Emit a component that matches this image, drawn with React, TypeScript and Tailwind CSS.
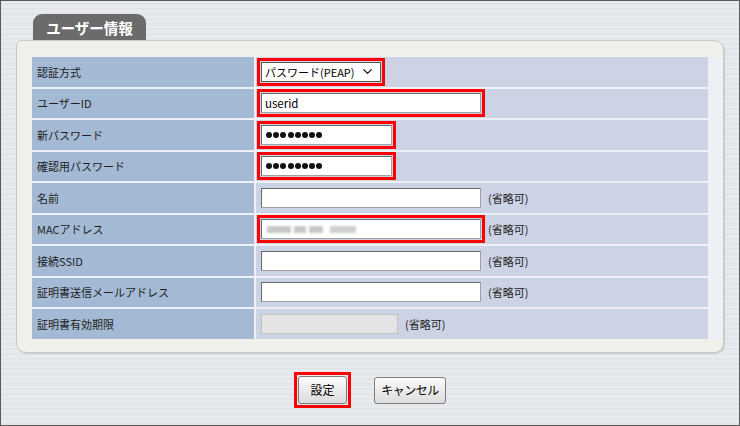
import { ChevronDown } from 'lucide-react';

const font = { fontFamily: '"Noto Sans CJK JP", "Noto Sans", sans-serif' };

function Hl({ on, children }: { on?: boolean; children: React.ReactNode }) {
  return (
    <div className={`p-[1px] border-[3px] ${on ? 'border-[#ff0000]' : 'border-transparent'}`}>
      {children}
    </div>
  );
}

function Box({ w, children, disabled }: { w: string; children?: React.ReactNode; disabled?: boolean }) {
  return (
    <div
      className={`${w} h-[20px] flex items-center px-[3px] text-[11.5px] text-black ${
        disabled
          ? 'bg-[#e4e4e4] border border-[#c2c2c2]'
          : 'bg-white border border-[#6a6a6a] border-b-[#a0a0a0] border-r-[#a0a0a0]'
      }`}
    >
      {children}
    </div>
  );
}

const Opt = () => <span className="ml-[3px] text-[11px] text-[#222]">(省略可)</span>;

const Dots = () => (
  <div className="flex items-center gap-[1.2px] ml-[1px]">
    {[0, 1, 2, 3, 4, 5, 6, 7].map((i) => (
      <span key={i} className="w-[6px] h-[6px] rounded-full bg-[#111]" />
    ))}
  </div>
);

const rows: { label: string; value: React.ReactNode }[] = [
  {
    label: '認証方式',
    value: (
      <Hl on>
        <div className="w-[120px] h-[20px] flex items-center justify-between bg-white border border-[#555] pl-[3px] pr-[5px] text-[11px] text-black whitespace-nowrap">
          <span>パスワード(PEAP)</span>
          <ChevronDown size={15} strokeWidth={1.8} />
        </div>
      </Hl>
    ),
  },
  {
    label: 'ユーザーID',
    value: (
      <Hl on>
        <Box w="w-[220px]">userid</Box>
      </Hl>
    ),
  },
  {
    label: '新パスワード',
    value: (
      <Hl on>
        <Box w="w-[131px]">
          <Dots />
        </Box>
      </Hl>
    ),
  },
  {
    label: '確認用パスワード',
    value: (
      <Hl on>
        <Box w="w-[131px]">
          <Dots />
        </Box>
      </Hl>
    ),
  },
  {
    label: '名前',
    value: (
      <>
        <Hl>
          <Box w="w-[220px]" />
        </Hl>
        <Opt />
      </>
    ),
  },
  {
    label: 'MACアドレス',
    value: (
      <>
        <Hl on>
          <Box w="w-[220px]">
            <div className="flex items-center gap-[3px] blur-[1px] ml-[2px]">
              <span className="w-[24px] h-[7px] bg-[#c8c8c8]" />
              <span className="w-[12px] h-[7px] bg-[#c8c8c8]" />
              <span className="w-[14px] h-[7px] bg-[#c8c8c8]" />
              <span className="w-[26px] h-[7px] bg-[#cfcfcf] ml-[4px]" />
            </div>
          </Box>
        </Hl>
        <Opt />
      </>
    ),
  },
  {
    label: '接続SSID',
    value: (
      <>
        <Hl>
          <Box w="w-[220px]" />
        </Hl>
        <Opt />
      </>
    ),
  },
  {
    label: '証明書送信メールアドレス',
    value: (
      <>
        <Hl>
          <Box w="w-[220px]" />
        </Hl>
        <Opt />
      </>
    ),
  },
  {
    label: '証明書有効期限',
    value: (
      <>
        <Hl>
          <Box w="w-[137px]" disabled />
        </Hl>
        <Opt />
      </>
    ),
  },
];

export default function App() {
  return (
    <div
      style={font}
      className="w-[740px] h-[426px] border border-[#5a5a5a] pt-[13px] pl-[15px] bg-[#e3e6ea] bg-[repeating-linear-gradient(180deg,#e7eaee_0px,#e7eaee_2px,#d9dde2_3px,#eceef1_4px,#e1e4e8_5px)]"
    >
      <div className="ml-[17px] w-[113px] h-[26px] rounded-t-[9px] bg-[#6b6b6b] text-white font-bold text-[14.5px] flex items-center justify-center pt-[1px]">
        ユーザー情報
      </div>
      <div className="w-[708px] h-[313px] rounded-[10px] rounded-tl-[6px] bg-[#f1f1ec] border border-[#c9c9c6] shadow-[1px_1px_1px_rgba(0,0,0,0.12)] pt-[16px] pl-[15px]">
        <div className="grid grid-cols-[222px_452px] gap-[2px] bg-[#edf0f5]">
          {rows.map((r) => (
            <div key={r.label} className="contents">
              <div className="h-[29.5px] bg-[#a4bad4] flex items-center pl-[5px] text-[11px] text-[#1e1e1e]">
                {r.label}
              </div>
              <div className="h-[29.5px] bg-[#cbd3e5] flex items-center pl-[1px]">{r.value}</div>
            </div>
          ))}
        </div>
      </div>
      <div className="flex items-center justify-center gap-[23px] mt-[19px] pr-[15px]">
        <div className="p-[1px] border-[3px] border-[#ff0000]">
          <button className="w-[49px] h-[28px] rounded-[3px] border border-[#7d7d7d] bg-[linear-gradient(180deg,#fbfbfb,#dcdcdc)] text-[12px] text-black">
            設定
          </button>
        </div>
        <button className="w-[72px] h-[27px] rounded-[3px] border border-[#7d7d7d] bg-[linear-gradient(180deg,#fbfbfb,#dcdcdc)] text-[12px] text-black tracking-[-0.5px]">
          キャンセル
        </button>
      </div>
    </div>
  );
}
